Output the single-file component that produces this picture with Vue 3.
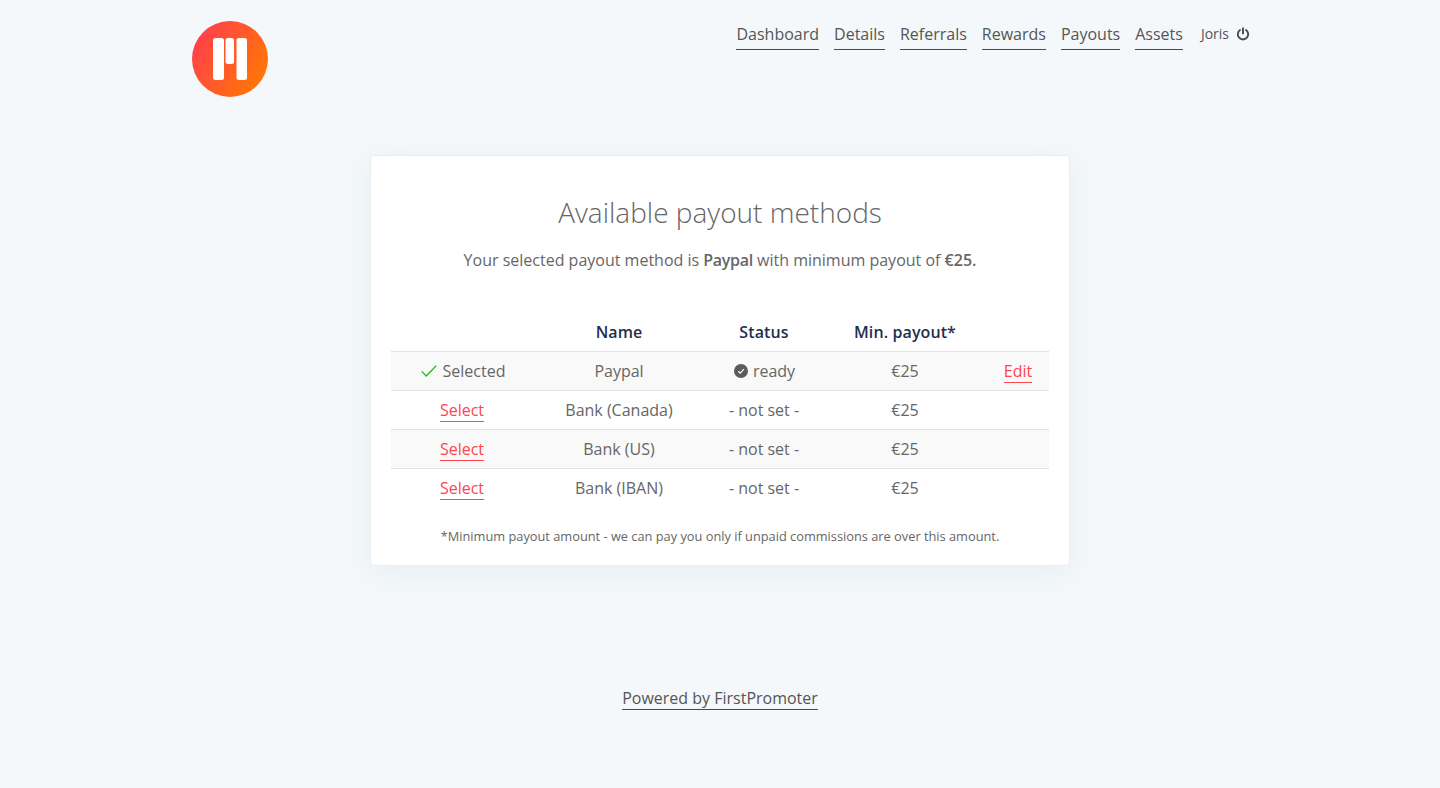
<script setup>
const navItems = ['Dashboard', 'Details', 'Referrals', 'Rewards', 'Payouts', 'Assets']
const rows = [
  { id: 1, selected: true, name: 'Paypal', ready: true, min: '€25', edit: true },
  { id: 2, name: 'Bank (Canada)', min: '€25' },
  { id: 3, name: 'Bank (US)', min: '€25' },
  { id: 4, name: 'Bank (IBAN)', min: '€25' },
]
</script>

<template>
  <div class="page">
    <header class="header">
      <a class="logo" aria-label="Logo">
        <svg width="76" height="76" viewBox="0 0 76 76">
          <defs>
            <linearGradient id="logoGrad" x1="0" y1="0.2" x2="1" y2="0.8">
              <stop offset="0" stop-color="#ff3d4f" />
              <stop offset="1" stop-color="#ff7a00" />
            </linearGradient>
          </defs>
          <circle cx="38" cy="38" r="38" fill="url(#logoGrad)" />
          <rect x="21" y="17" width="11" height="42" rx="2.5" fill="#fff" />
          <rect x="33.5" y="17" width="8.5" height="26" rx="2.5" fill="#fff" />
          <rect x="44.5" y="17" width="10.5" height="42" rx="2.5" fill="#fff" />
        </svg>
      </a>
      <nav class="nav">
        <a v-for="item in navItems" :key="item" class="nav-link">{{ item }}</a>
        <span class="user">
          <span>Joris</span>
          <svg class="power" width="14" height="14" viewBox="0 0 14 14" fill="none" stroke="#4a4a4a" stroke-width="1.9" stroke-linecap="round">
            <path d="M7 1.2v5.2" />
            <path d="M4 3a5.2 5.2 0 1 0 6 0" />
          </svg>
        </span>
      </nav>
    </header>

    <main class="card">
      <h1 class="title">Available payout methods</h1>
      <p class="lead">Your selected payout method is <b class="tight">Paypal</b> with minimum payout of <b>€25.</b></p>

      <table class="methods">
        <colgroup>
          <col class="c1" /><col class="c2" /><col class="c3" /><col class="c4" /><col class="c5" />
        </colgroup>
        <thead>
          <tr>
            <th></th>
            <th>Name</th>
            <th>Status</th>
            <th>Min. payout*</th>
            <th></th>
          </tr>
        </thead>
        <tbody>
          <tr v-for="row in rows" :key="row.id">
            <td>
              <span v-if="row.selected" class="selected">
                <svg width="16" height="12" viewBox="0 0 16 12" fill="none" stroke="#1ac01a" stroke-width="1.3">
                  <path d="M0.8 6.4 5.2 11 15.2 0.8" />
                </svg>
                Selected
              </span>
              <a v-else class="action">Select</a>
            </td>
            <td>{{ row.name }}</td>
            <td>
              <span v-if="row.ready" class="ready">
                <svg width="14" height="14" viewBox="0 0 14 14">
                  <circle cx="7" cy="7" r="7" fill="#5c5c5c" />
                  <path d="M4.2 7.2 6.2 9.1 9.9 5.2" fill="none" stroke="#fff" stroke-width="1.2" />
                </svg>
                ready
              </span>
              <template v-else>- not set -</template>
            </td>
            <td>{{ row.min }}</td>
            <td><a v-if="row.edit" class="action">Edit</a></td>
          </tr>
        </tbody>
      </table>

      <p class="note">*Minimum payout amount - we can pay you only if unpaid commissions are over this amount.</p>
    </main>

    <footer class="footer">
      <a class="powered">Powered by FirstPromoter</a>
    </footer>
  </div>
</template>

<style>
html, body {
  margin: 0;
  background: #f4f8fb;
}
</style>

<style scoped>
.page {
  min-height: 788px;
  background: #f4f8fb;
  font-family: "Open Sans", "Liberation Sans", sans-serif;
  font-size: 16px;
  color: #666;
  box-sizing: border-box;
  padding-top: 21px;
}
.header {
  width: 1059px;
  margin-left: 192px;
  display: flex;
  justify-content: space-between;
  align-items: flex-start;
  height: 134px;
}
.logo {
  display: block;
  width: 76px;
  height: 76px;
}
.logo svg {
  display: block;
}
.nav {
  display: flex;
  align-items: flex-start;
  gap: 15px;
  height: 29px;
  padding-right: 1px;
}
.nav-link {
  color: #555;
  line-height: 26px;
  border-bottom: 1px solid #4a4a4a;
  padding-bottom: 2px;
}
.user {
  display: flex;
  align-items: center;
  gap: 7px;
  margin-left: 3px;
  font-size: 14px;
  line-height: 26px;
  color: #555;
}
.power {
  display: block;
}
.card {
  width: 700px;
  height: 411px;
  box-sizing: border-box;
  margin: 0 auto;
  background: #fff;
  border: 1px solid #e8edf1;
  border-radius: 4px;
  box-shadow: 0 6px 30px rgba(90, 110, 130, 0.08);
  padding: 36px 20px 0;
  text-align: center;
}
.title {
  margin: 0;
  font-size: 28px;
  line-height: 40px;
  font-weight: 300;
  color: #666;
}
.lead {
  margin: 15px 0 0;
  line-height: 26px;
  color: #666;
}
.lead b {
  font-weight: 600;
}
.lead .tight {
  letter-spacing: -0.3px;
}
.methods {
  width: 658px;
  table-layout: fixed;
  border-collapse: collapse;
  margin-top: 40px;
}
.c1 { width: 142px; }
.c2 { width: 172px; }
.c3 { width: 118px; }
.c4 { width: 164px; }
.c5 { width: 62px; }
th {
  height: 38px;
  padding: 0;
  font-weight: 600;
  letter-spacing: 0.1px;
  color: #1f2f4f;
  border-bottom: 1px solid #e2e2e2;
}
td {
  height: 38px;
  padding: 0;
  color: #666;
  text-align: center;
  border-bottom: 1px solid #e2e2e2;
}
tbody tr:nth-child(odd) td {
  background: #f9f9f9;
}
tbody tr:last-child td {
  border-bottom: 0;
}
.action {
  color: #ff4450;
  border-bottom: 1px solid #ff4450;
}
.selected,
.ready {
  display: inline-flex;
  align-items: center;
}
.selected {
  gap: 6px;
  padding-left: 2px;
}
.ready {
  gap: 5px;
  padding-left: 1px;
}
.note {
  margin: 19px 0 0;
  font-size: 12.8px;
  line-height: 20px;
  color: #666;
}
.footer {
  text-align: center;
  margin-top: 121px;
}
.powered {
  color: #555;
  border-bottom: 1px solid #4a4a4a;
}
</style>
